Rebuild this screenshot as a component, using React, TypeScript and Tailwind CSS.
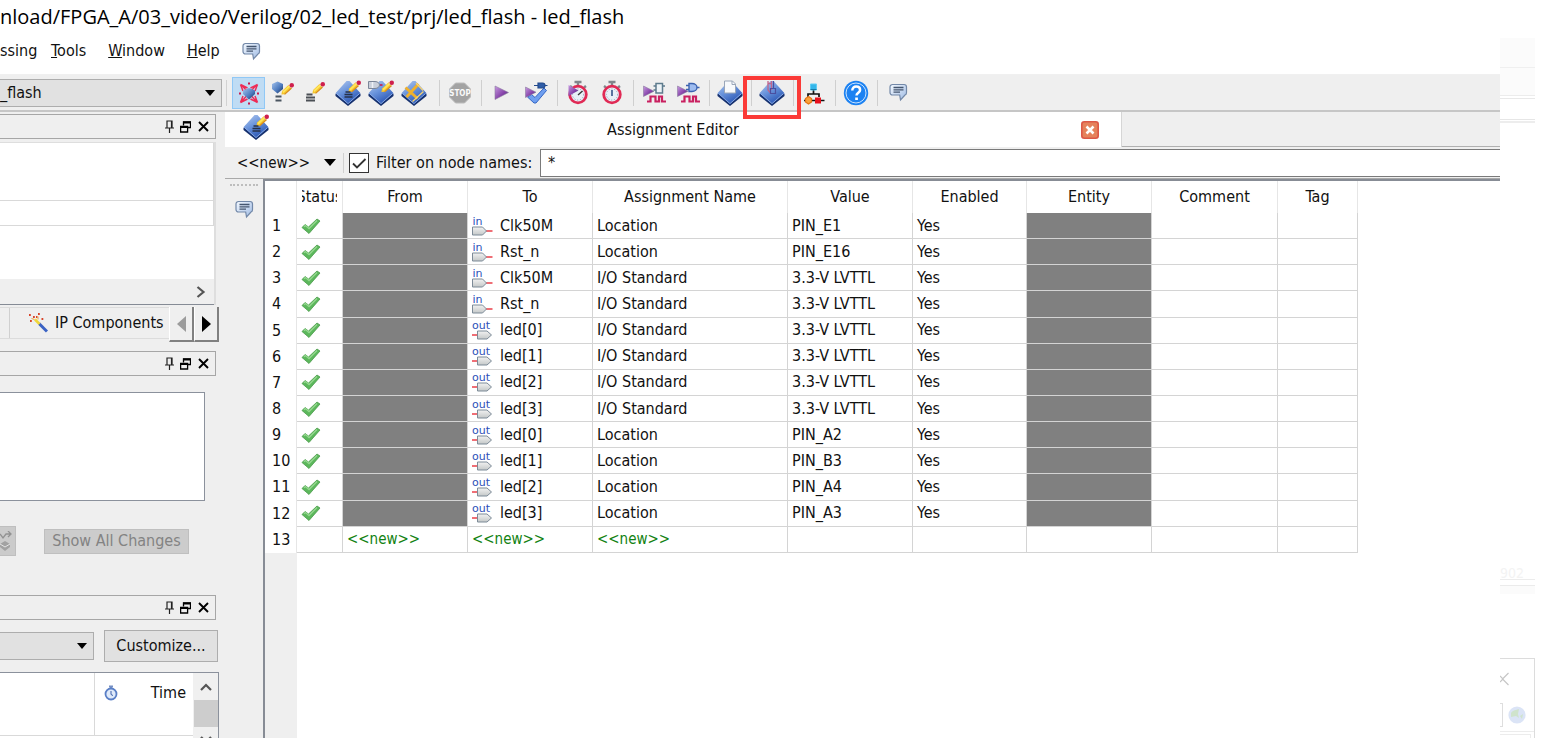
import type { ReactNode } from "react";

const INK = "text-[#111111]";

/* ---------- shared drawings ---------- */

function Defs() {
  return (
    <svg width="0" height="0" className="absolute" aria-hidden="true">
      <defs>
        <linearGradient id="blue" x1="0" y1="0" x2="0.6" y2="1">
          <stop offset="0" stopColor="#b4caee" />
          <stop offset="0.5" stopColor="#6a94dc" />
          <stop offset="1" stopColor="#2a56b4" />
        </linearGradient>
        <linearGradient id="purple" x1="0" y1="0" x2="1" y2="1">
          <stop offset="0" stopColor="#c79be0" />
          <stop offset="0.6" stopColor="#8440a8" />
          <stop offset="1" stopColor="#3d5560" />
        </linearGradient>
        <linearGradient id="bubble" x1="0" y1="0" x2="1" y2="1">
          <stop offset="0" stopColor="#f4f9ff" />
          <stop offset="1" stopColor="#9fbbe4" />
        </linearGradient>
        <linearGradient id="gem" x1="0" y1="0" x2="1" y2="1">
          <stop offset="0" stopColor="#a5c4ee" />
          <stop offset="0.6" stopColor="#4a78bd" />
          <stop offset="1" stopColor="#1d2f4f" />
        </linearGradient>
        <linearGradient id="pin" x1="0" y1="0" x2="0" y2="1">
          <stop offset="0" stopColor="#f2f2f2" />
          <stop offset="1" stopColor="#c4c8c8" />
        </linearGradient>
      </defs>
    </svg>
  );
}

function Icon({ children }: { children: ReactNode }) {
  return (
    <svg viewBox="0 0 26 26" className="h-[26px] w-[26px] shrink-0" fill="none" aria-hidden="true">
      {children}
    </svg>
  );
}

function Diamond() {
  return (
    <>
      <path d="M13 3 25.500 14v2L13 26 .5 16v-2z" fill="#16316f" />
      <path d="M11.500 1h3l11 12.200L13 23.600.5 13.200z" fill="url(#blue)" />
      <path d="m1.500 13.600 11.500 10 11.500-10" stroke="#8fb0ea" strokeWidth="0.9" />
    </>
  );
}

function Pencil({ x = 0, y = 0 }: { x?: number; y?: number }) {
  return (
    <g transform={`translate(${x} ${y})`}>
      <path d="m12.400 11.600.7-3.600 6.600-6.200 3.200 3.200-7 6.200z" fill="#f4c430" />
      <path d="m13.400 8.600 6.800-6.400 1.300 1.300-7 6.600z" fill="#ffe65c" />
      <path d="m15.600 11.400 7-6.400" stroke="#d88a1c" strokeWidth="1.100" />
      <path d="m19.400 2.500 1.500-1.400 2.900 2.900-1.400 1.400z" fill="#e9c9a8" />
      <circle cx="22.800" cy="2.200" r="2.200" fill="#cf1f4d" />
    </g>
  );
}

function Bubble() {
  return (
    <svg viewBox="0 0 19 19" className="h-[19px] w-[19px] shrink-0" fill="none" aria-hidden="true">
      <path
        d="M3.500 1.500h11.500a2.500 2.500 0 0 1 2.500 2.500v5.500a2.500 2.500 0 0 1-1.500 2.500l-4.500 5-.8-5H3.500A2.500 2.500 0 0 1 1 9.500V4a2.500 2.500 0 0 1 2.500-2.500z"
        fill="url(#bubble)"
        stroke="#7288a8"
        strokeWidth="1.200"
      />
      <path d="M4.500 4.500h10M4.500 6.800h10M4.500 9.100h6.500" stroke="#45566f" strokeWidth="1.300" />
    </svg>
  );
}

function SmallPlay() {
  return <path d="M2.500 7 13 12.200 2.500 17.500z" fill="url(#purple)" stroke="#8c7aa0" strokeWidth="0.600" />;
}

function Wave() {
  return <path d="M6 22.500h3.500v-5h5v5h3.500v-5h3v5h4" stroke="#c92060" strokeWidth="2.200" />;
}

/* ---------- toolbar icons ---------- */

const IcChip = () => (
  <Icon>
    <path
      d="M6 5.500 20 21M20 5.500 6 21M4.500 4.500l7 3.500M21.500 4.500l-7 3.500M4.500 22.500l7-3.500M21.500 22.500l-7-3.500M4.500 4.500l2.500 6.500M21.500 4.500 19 11M4.500 22.500 7 16M21.500 22.500 19 16"
      stroke="#ee2b56"
      strokeWidth="1.500"
    />
    <path d="M13 2.500v2M13 22.500v2M3 13.500h2M21 13.500h2" stroke="#c9184c" strokeWidth="2" />
    <path d="M13 8 19 10.500V14L13 19.500 7 14v-3.500z" fill="url(#gem)" />
  </Icon>
);

const IcGemPencil = () => (
  <Icon>
    <path d="M8.500 1.500 14 4v5L8.500 13.500 3 9V4z" fill="url(#gem)" />
    <Pencil y={3} />
    <path d="M6.500 16.500h6M6.500 20.500h6" stroke="#4a5560" strokeWidth="1.900" />
  </Icon>
);

const IcPencil = () => (
  <Icon>
    <Pencil x={-2} y={2} />
    <path d="M4.500 14.500h6M4 17.500h9M4 20.500h9" stroke="#4a4f55" strokeWidth="1.900" />
  </Icon>
);

const IcAssign = () => (
  <Icon>
    <Diamond />
    <Pencil x={1} y={0.500} />
    <path d="M10.500 12h5M9.500 14.500h8M9.500 17h8" stroke="#27324a" strokeWidth="1.600" />
  </Icon>
);

const IcPinPlan = () => (
  <Icon>
    <Diamond />
    <path d="M.500 1.500h6.500c3 0 4.500 2 4.500 3.500S10 8.500 7 8.500H.500z" fill="#c9cfda" stroke="#7b8698" />
    <path d="M4.500 2v6" stroke="#eef1f6" strokeWidth="1.500" />
    <path d="M12 5h2.500" stroke="#c9184c" strokeWidth="1.600" />
    <Pencil x={1} y={0.500} />
  </Icon>
);

const IcPlanner = () => (
  <Icon>
    <Diamond />
    <path d="m4.500 7.500 12 11M17.500 4l-12 13" stroke="#f0b12c" strokeWidth="2.800" />
    <path d="m15 3 7 7.500M11.500 21.500l11-10" stroke="#f6d272" strokeWidth="1.300" />
  </Icon>
);

const IcStop = () => (
  <Icon>
    <path d="M8.500 3h9l6 6v8l-6 6h-9l-6-6V9z" fill="#a3a3a3" stroke="#bcbcbc" />
    <text x="13" y="16.400" textAnchor="middle" fontSize="8" fontWeight="700" fill="#fafafa" fontFamily="DejaVu Sans Condensed, sans-serif">
      STOP
    </text>
  </Icon>
);

const IcPlay = () => (
  <Icon>
    <path d="M6 6 19.500 12.500 6 19.500z" fill="url(#purple)" stroke="#8c7aa0" strokeWidth="0.600" />
  </Icon>
);

const IcPlayCheck = () => (
  <Icon>
    <path d="m4.500 17 4-2.500 3.500 3 9-9.500 2.500 2.500-10.500 12.500h-2z" fill="#6f9ff0" stroke="#3566c4" />
    <SmallPlay />
    <path
      d="M11 5.500h4M15 3h4.500c2 0 2.500 1.500 2.500 2.500S21.500 8 19.500 8H15zM22 5.500h2.500"
      fill="#2f5da8"
      stroke="#234a8c"
      strokeWidth="1.200"
    />
  </Icon>
);

function Watch() {
  return (
    <>
      <path d="M9.500 2h7M13 2v4M5 6l2 1.500M21 6l-2 1.500" stroke="#80868c" strokeWidth="2.400" />
      <circle cx="13" cy="14.500" r="8.300" fill="#e8eff7" stroke="#e02a55" strokeWidth="2.800" />
      <circle cx="13" cy="14.500" r="5.600" stroke="#8e9db0" strokeDasharray="1 1.800" />
    </>
  );
}

const IcWatchPlay = () => (
  <Icon>
    <Watch />
    <path d="m13 15 4.500-4" stroke="#333" strokeWidth="1.300" />
    <path d="M3.500 5 13.500 10.500 3.500 16z" fill="url(#purple)" />
  </Icon>
);

const IcWatch = () => (
  <Icon>
    <Watch />
    <path d="M13 10v6" stroke="#3f5d8f" strokeWidth="1.700" />
  </Icon>
);

const IcSimRtl = () => (
  <Icon>
    <g transform="translate(0 -1)">
      <SmallPlay />
      <path d="M15 4.500h6.500V14H15zM12.500 7H15M12.500 11H15M21.500 7H24" fill="#edf3f7" stroke="#5d7b8d" strokeWidth="1.500" />
      <Wave />
    </g>
  </Icon>
);

const IcSimGate = () => (
  <Icon>
    <g transform="translate(0 -1)">
      <SmallPlay />
      <path
        d="M14 4.500h3c3 0 5 2 5 4s-2 4-5 4h-3zM11 6.500h3M11 10.500h3M22 8.500h2.500"
        fill="#9ebcf0"
        stroke="#3b62b0"
        strokeWidth="1.400"
      />
      <Wave />
    </g>
  </Icon>
);

const IcReport = () => (
  <Icon>
    <Diamond />
    <path d="M7.500 1h8l3 3v9h-11z" fill="#f7f9fc" stroke="#9aa6b8" />
    <path d="M15 1v3.500h3.500" stroke="#9aa6b8" />
  </Icon>
);

const IcProgrammer = () => (
  <Icon>
    <Diamond />
    <path d="M9 1v9l3 3.500M12.500 1v9M9 3.500h3.500" stroke="#c2658c" strokeWidth="1.300" />
    <path d="M11.500 8.500h5v5h-5zM14.500 1v7" stroke="#4a4f9f" strokeWidth="1.200" />
  </Icon>
);

const IcQsys = () => (
  <Icon>
    <path d="M12.500 10v4M7 17v-3h11v3M3 20.500h2M10 20.500h4M20 20.500h3.500" stroke="#111" strokeWidth="1.700" />
    <path d="M9.500 4h6v6h-6z" fill="#35b6ea" stroke="#5fcdf4" />
    <path d="M9.500 9.500h6" stroke="#187aa8" />
    <path d="m7.500 16.500 3 2V22l-3 2-3-2v-3.500z" fill="#f9a33b" stroke="#e87514" strokeWidth="1.300" />
    <path d="M14 17.500h6V23.500h-6z" fill="#e8101c" />
  </Icon>
);

const IcHelp = () => (
  <Icon>
    <circle cx="13" cy="13" r="12.200" fill="#1c82f2" />
    <circle cx="13" cy="13" r="10" stroke="#c9e3ff" strokeWidth="1" />
    <path
      d="M9.300 10.500c0-2.500 1.600-3.900 3.900-3.900s3.900 1.400 3.900 3.400c0 2.700-3.600 2.800-3.600 5.500"
      stroke="#fff"
      strokeWidth="2.500"
    />
    <path d="M12.200 17.500h2.700v2.500h-2.700z" fill="#fff" />
  </Icon>
);

type ToolButtonProps = { label: string; children: ReactNode; active?: boolean; narrow?: boolean; marked?: boolean };

function ToolButton({ label, children, active, narrow, marked }: ToolButtonProps) {
  return (
    <button
      type="button"
      aria-label={label}
      className={`relative flex h-8 shrink-0 items-center justify-center ${narrow ? "w-[33px]" : "w-[34px]"} ${
        active ? "border border-[#90c8f6] bg-[#bfdcf4]" : ""
      }`}
    >
      {children}
      {marked && <span className="absolute -left-3 -top-px z-10 h-[43px] w-[58px] border-4 border-[#fb3a37]" />}
    </button>
  );
}

function Sep() {
  return (
    <span className="flex h-[26px] w-2 shrink-0 justify-center">
      <span className="w-px bg-[#cfcfcf]" />
    </span>
  );
}

function DownArrow() {
  return (
    <svg viewBox="0 0 10 6" className="h-[6px] w-[10px] shrink-0" aria-hidden="true">
      <path d="M0 0h10L5 6z" fill="#000" />
    </svg>
  );
}

/* ---------- left docks ---------- */

function DockTitle() {
  return (
    <div className="mr-[9px] flex h-[25px] shrink-0 items-center justify-end gap-[5px] border border-l-0 border-[#a6a6a6] pr-[6px]">
      <button type="button" aria-label="Pin">
        <svg viewBox="0 0 11 13" className="h-[13px] w-[11px]" fill="none" aria-hidden="true">
          <path d="M3 8V1h5v7M1 8h9M5.500 8v5" stroke="#222" strokeWidth="1.200" />
          <path d="M7.500 1v7" stroke="#222" strokeWidth="1.200" />
        </svg>
      </button>
      <button type="button" aria-label="Float">
        <svg viewBox="0 0 11 12" className="h-3 w-[11px]" fill="none" aria-hidden="true">
          <path d="M3.500 4.500V1h7v5.500H8" stroke="#000" strokeWidth="1.300" />
          <path d="M3 1.500h8M0 6h8" stroke="#000" strokeWidth="2" />
          <path d="M.600 5.500h7v5.500h-7z" stroke="#000" strokeWidth="1.300" />
        </svg>
      </button>
      <button type="button" aria-label="Close" className="pl-0.5">
        <svg viewBox="0 0 11 11" className="h-[11px] w-[11px]" fill="none" aria-hidden="true">
          <path d="m1 1 9 9M10 1l-9 9" stroke="#000" strokeWidth="1.900" />
        </svg>
      </button>
    </div>
  );
}

function LeftDocks() {
  return (
    <div className="flex w-[225px] shrink-0 flex-col overflow-hidden pt-[2px]">
      <DockTitle />
      <div className="mr-[9px] mt-[3px] flex h-[163px] shrink-0 flex-col border-r-2 border-t border-[#dedede] bg-white">
        <div className="h-[58px] border-b border-r border-[#d9d9d9]" />
        <div className="h-[25px] border-b border-r border-[#d9d9d9]" />
        <div className="flex-1" />
        <div className="flex h-[26px] items-center justify-end border-b border-[#858b95] bg-[#efefef] pr-2">
          <svg viewBox="0 0 10 12" className="h-3 w-[10px]" fill="none" aria-hidden="true">
            <path d="m1.500 1 6 5-6 5" stroke="#555" strokeWidth="2.200" />
          </svg>
        </div>
      </div>
      <div className="mt-[2px] flex h-[35px] shrink-0">
        <div className="mb-[3px] flex flex-1 border-y border-[#dcdcdc]">
          <span className="w-[10px] border-r border-[#d0d0d0]" />
          <button type="button" className="flex flex-1 items-center gap-[7px] whitespace-nowrap pl-[18px]">
            <svg viewBox="0 0 20 20" className="h-5 w-5 shrink-0" fill="none" aria-hidden="true">
              <path d="m11 10.500 8 8" stroke="#3a62c4" strokeWidth="3" />
              <path d="m7 6.500 4.500 4.500" stroke="#f0d63a" strokeWidth="2.600" />
              <path d="M1 2h1.800M5 4h1.800M10 1h1.800M13.500 6h1.800M2 8h1.800M8 4h1.500" stroke="#d8452a" strokeWidth="1.800" />
              <path d="M10 3.500v3M3.500 5.500l3 1" stroke="#f2a33a" />
            </svg>
            IP Components
          </button>
        </div>
        <button type="button" aria-label="Previous tab" className="flex w-[25px] shrink-0 items-center justify-center border-b-2 border-l border-r-2 border-[#808080] border-l-white">
          <svg viewBox="0 0 9 16" className="h-4 w-[9px]" aria-hidden="true">
            <path d="M9 0v16L0 8z" fill="#9c9c9c" />
          </svg>
        </button>
        <button type="button" aria-label="Next tab" className="mr-1.5 flex w-[25px] shrink-0 items-center justify-center border-b-2 border-l border-r-2 border-[#808080] border-l-white">
          <svg viewBox="0 0 9 16" className="h-4 w-[9px]" aria-hidden="true">
            <path d="M0 0v16l9-8z" fill="#000" />
          </svg>
        </button>
      </div>

      <div className="h-[9px] shrink-0" />
      <DockTitle />
      <div className="mr-5 mt-4 h-[109px] shrink-0 border border-l-0 border-[#8b919c] bg-white" />
      <div className="mt-[25px] flex h-[30px] shrink-0 items-center">
        <button type="button" aria-label="Refresh" disabled className="flex h-[30px] w-4 items-center border border-l-0 border-[#bfbfbf] bg-[#cbcbcb]">
          <svg viewBox="0 0 12 20" className="h-5 w-3" fill="none" aria-hidden="true">
            <path d="M0 3l3 4 3-4h4M8 0l3 3-3 3" stroke="#929292" strokeWidth="1.300" />
            <path d="M0 13l5-3 5 3v3l-5 4-5-4z" fill="#a2a2a2" />
            <path d="m0 13 5 3 5-3" stroke="#e4e4e4" />
          </svg>
        </button>
        <button type="button" disabled className="ml-7 h-[25px] w-[145px] whitespace-nowrap border border-[#bfbfbf] bg-[#cccccc] leading-none text-[#838383]">
          Show All Changes
        </button>
      </div>

      <div className="h-[39px] shrink-0" />
      <DockTitle />
      <div className="mt-[10px] flex h-8 shrink-0 items-center gap-[10px] pr-[7px]">
        <div className="relative h-7 w-[94px]">
          <select aria-label="Flow" className="h-full w-full appearance-none border border-l-0 border-[#adadad] bg-[#e1e1e1]" />
          <span className="pointer-events-none absolute right-[7px] top-[11px]">
            <DownArrow />
          </span>
        </div>
        <button type="button" className="h-8 flex-1 whitespace-nowrap border border-[#adadad] bg-[#e1e1e1]">
          Customize...
        </button>
      </div>
      <div className="mr-1.5 mt-[10px] flex min-h-0 flex-1 overflow-hidden border-r border-t border-[#8b919c] bg-white">
        <div className="flex-1">
          <div className="flex h-[63px] border-b border-[#d9d9d9]">
            <div className="w-[95px] border-r border-[#d9d9d9]" />
            <div className="flex h-10 flex-1 items-center justify-between pl-[9px] pr-[7px]">
              <svg viewBox="0 0 14 16" className="h-4 w-[14px]" fill="none" aria-hidden="true">
                <path d="M5 1.500h4M7 1v3" stroke="#7690c4" strokeWidth="2" />
                <circle cx="7" cy="9" r="5.500" fill="#dfeafa" stroke="#5a7fc6" strokeWidth="1.800" />
                <path d="M7 6v3.500l2 1" stroke="#3c5ea8" />
              </svg>
              <span>Time</span>
            </div>
          </div>
        </div>
        <div className="flex w-[25px] shrink-0 flex-col items-center bg-[#f0f0f0]">
          <div className="flex h-[27px] shrink-0 items-center">
            <svg viewBox="0 0 12 8" className="h-2 w-3" fill="none" aria-hidden="true">
              <path d="m1 7 5-5 5 5" stroke="#555" strokeWidth="2.200" />
            </svg>
          </div>
          <div className="h-[27px] w-[24px] shrink-0 bg-[#cdcdcd]" />
          <svg viewBox="0 0 12 8" className="mt-[9px] h-2 w-3 shrink-0" fill="none" aria-hidden="true">
            <path d="m1 1 5 5 5-5" stroke="#555" strokeWidth="2.200" />
          </svg>
        </div>
      </div>
    </div>
  );
}

/* ---------- assignment table ---------- */

type Row = { dir: "in" | "out"; to: string; name: string; value: string };

const rows: Row[] = [
  { dir: "in", to: "Clk50M", name: "Location", value: "PIN_E1" },
  { dir: "in", to: "Rst_n", name: "Location", value: "PIN_E16" },
  { dir: "in", to: "Clk50M", name: "I/O Standard", value: "3.3-V LVTTL" },
  { dir: "in", to: "Rst_n", name: "I/O Standard", value: "3.3-V LVTTL" },
  { dir: "out", to: "led[0]", name: "I/O Standard", value: "3.3-V LVTTL" },
  { dir: "out", to: "led[1]", name: "I/O Standard", value: "3.3-V LVTTL" },
  { dir: "out", to: "led[2]", name: "I/O Standard", value: "3.3-V LVTTL" },
  { dir: "out", to: "led[3]", name: "I/O Standard", value: "3.3-V LVTTL" },
  { dir: "out", to: "led[0]", name: "Location", value: "PIN_A2" },
  { dir: "out", to: "led[1]", name: "Location", value: "PIN_B3" },
  { dir: "out", to: "led[2]", name: "Location", value: "PIN_A4" },
  { dir: "out", to: "led[3]", name: "Location", value: "PIN_A3" },
];

const headers = ["From", "To", "Assignment Name", "Value", "Enabled", "Entity", "Comment", "Tag"];
const CELL = "border-b border-r border-[#d4d4d4] p-0 pl-1";

function Check() {
  return (
    <svg viewBox="0 0 20 16" className="h-4 w-5" fill="none" aria-hidden="true">
      <path d="m1 9.500 3-3 3.500 2.500L16 1l3 2L8 15.500z" fill="#5cb85c" stroke="#4a9a4a" strokeWidth="0.800" />
      <path d="m3 8.800 1.500-1.200L8 10.500l8-8" stroke="#95d88f" strokeWidth="1.300" />
    </svg>
  );
}

function PinIcon({ dir }: { dir: "in" | "out" }) {
  return (
    <svg viewBox="0 0 21 20" className="h-5 w-[21px] shrink-0" fill="none" aria-hidden="true">
      <text x={dir === "in" ? 0.5 : 0} y="8.500" fontSize="11" fill="#2c50b8" fontFamily="DejaVu Sans, sans-serif">
        {dir}
      </text>
      {dir === "in" ? (
        <>
          <path d="M14 15h6.500" stroke="#e8323c" strokeWidth="1.400" />
          <path d="M.500 11h10l4 4-4 4h-10z" fill="url(#pin)" stroke="#7d8b98" />
        </>
      ) : (
        <>
          <path d="M0 15h6" stroke="#e8323c" strokeWidth="1.400" />
          <path d="M5.500 11h9.500l4.500 4-4.500 4H5.500z" fill="url(#pin)" stroke="#7d8b98" />
        </>
      )}
    </svg>
  );
}

function AssignmentTable() {
  return (
    <table className="h-[372px] w-[1093px] table-fixed border-separate border-spacing-0 bg-white">
      <colgroup>
        <col className="w-8" />
        <col className="w-[46px]" />
        <col className="w-[125px]" />
        <col className="w-[125px]" />
        <col className="w-[195px]" />
        <col className="w-[125px]" />
        <col className="w-[114px]" />
        <col className="w-[125px]" />
        <col className="w-[126px]" />
        <col className="w-[80px]" />
      </colgroup>
      <thead>
        <tr className="h-8">
          <th className="border-r border-[#e6e6e6] p-0" aria-label="Row" />
          <th className="border-r border-[#e6e6e6] p-0 font-normal">
            <span className="mx-auto flex w-[35px] justify-center overflow-hidden">Status</span>
          </th>
          {headers.map((h) => (
            <th key={h} className="border-r border-[#e6e6e6] p-0 font-normal">
              {h}
            </th>
          ))}
        </tr>
      </thead>
      <tbody>
        {rows.map((r, i) => (
          <tr key={i} className="h-[26px]">
            <td className="border-r border-[#e6e6e6] p-0 pl-[7px]">{i + 1}</td>
            <td className={CELL}>
              <Check />
            </td>
            <td className="border-b border-r border-[#d4d4d4] bg-[#808080] p-0" />
            <td className={CELL}>
              <span className="flex items-center gap-[7px]">
                <PinIcon dir={r.dir} />
                {r.to}
              </span>
            </td>
            <td className={CELL}>{r.name}</td>
            <td className={CELL}>{r.value}</td>
            <td className={CELL}>Yes</td>
            <td className="border-b border-r border-[#d4d4d4] bg-[#808080] p-0" />
            <td className={CELL} />
            <td className={CELL} />
          </tr>
        ))}
        <tr className="h-[26px] text-[15px] text-[#128212]">
          <td className="border-r border-[#e6e6e6] p-0 pl-[7px] text-base leading-5 text-[#111111]">13</td>
          <td className={CELL} />
          <td className={CELL}>&lt;&lt;new&gt;&gt;</td>
          <td className={CELL}>&lt;&lt;new&gt;&gt;</td>
          <td className={CELL}>&lt;&lt;new&gt;&gt;</td>
          <td className={CELL} />
          <td className={CELL} />
          <td className={CELL} />
          <td className={CELL} />
          <td className={CELL} />
        </tr>
      </tbody>
    </table>
  );
}

function Editor() {
  return (
    <div className="flex min-w-0 flex-1 flex-col">
      <div className="flex h-[35px] shrink-0">
        <div className="flex w-[897px] items-center border-r border-[#d6d6d6] bg-white pl-[18px] pr-[22px]">
          <span className="-mt-1.5">
            <IcAssign />
          </span>
          <span className="flex-1 pr-1 text-center">Assignment Editor</span>
          <button type="button" aria-label="Close tab">
            <svg viewBox="0 0 18 18" className="h-[18px] w-[18px]" fill="none" aria-hidden="true">
              <rect x="0.800" y="0.800" width="16.400" height="16.400" rx="2.500" fill="#e5825c" stroke="#dc5847" strokeWidth="1.600" />
              <path d="m5.500 5.500 7 7M12.500 5.500l-7 7" stroke="#fff" strokeWidth="2.600" />
            </svg>
          </button>
        </div>
        <div className="flex-1 border-b border-[#b0b0b0]" />
      </div>
      <div className="flex h-8 shrink-0 items-center border-b border-[#a9a9a9] pl-3">
        <button type="button" className="flex w-[107px] items-center justify-between border-r border-[#d0d0d0] pr-[7px] text-[15px]">
          &lt;&lt;new&gt;&gt;
          <svg viewBox="0 0 12 7" className="h-[7px] w-3" aria-hidden="true">
            <path d="M0 0h12L6 7z" fill="#000" />
          </svg>
        </button>
        <span className="relative ml-[5px] h-5 w-5">
          <input id="filter-on" type="checkbox" defaultChecked className="block h-5 w-5 appearance-none border border-[#333] bg-white" />
          <svg viewBox="0 0 20 20" className="pointer-events-none absolute inset-0 h-5 w-5" fill="none" aria-hidden="true">
            <path d="m4 10.500 4 4L16.500 6" stroke="#333" strokeWidth="1.800" />
          </svg>
        </span>
        <label htmlFor="filter-on" className="w-[171px] whitespace-nowrap pl-[7px]">
          Filter on node names:
        </label>
        <input aria-label="Filter" defaultValue="*" className="h-7 min-w-0 flex-1 border border-r-0 border-[#7a7a7a] bg-white px-[7px]" />
      </div>
      <div className="flex min-h-0 flex-1">
        <div className="flex w-[38px] shrink-0 flex-col items-center pt-[5px]">
          <span className="w-7 border-t-2 border-dotted border-[#bdbdbd]" />
          <button type="button" aria-label="Messages" className="mt-3.5">
            <Bubble />
          </button>
        </div>
        <div className="flex min-w-0 flex-1 flex-col border-l-2 border-t-2 border-[#878c95] bg-white">
          <AssignmentTable />
          <div className="w-8 flex-1 bg-[#efefef]" />
        </div>
      </div>
    </div>
  );
}

/* ---------- faded strip at the right ---------- */

function FadedStrip() {
  return (
    <aside className="flex w-[61px] shrink-0 flex-col overflow-hidden bg-white pr-[26px]">
      <div className="h-[38px] shrink-0" />
      <div className="h-[30px] shrink-0 border-b border-[#efefef] bg-[#fbfbfb]" />
      <div className="h-[28px] shrink-0 border-b border-[#ececec] bg-[#fbfbfb]" />
      <div className="h-[3px] shrink-0 border-b border-[#e8e8e8]" />
      <div className="h-[21px] shrink-0 border-b border-[#e6e6e6]" />
      <div className="h-[3px] shrink-0 border-b-2 border-[#ededed]" />
      <div className="h-[443px] shrink-0" />
      <div className="h-[14px] shrink-0 border-b border-[#ececec] text-[14px] leading-[14px] text-[#f3f3f3]">902</div>
      <div className="h-[6px] shrink-0 border-b border-[#ebebeb]" />
      <div className="h-[8px] shrink-0 bg-[#fbfbfb]" />
      <div className="h-[64px] shrink-0" />
      <div className="min-h-0 flex-1 overflow-hidden border-r border-t border-[#dcdcdc]">
        <div className="flex h-[40px] items-center">
          <svg viewBox="0 0 9 14" className="h-3.5 w-[9px]" fill="none" aria-hidden="true">
            <path d="m8.500 1-6 6 6 6M0 4l3 3-3 3" stroke="#c6c6c6" strokeWidth="1.200" />
          </svg>
        </div>
        <div className="mt-[4px] flex h-[24px] items-center gap-[5px]">
          <span className="h-6 w-[3px] border border-l-0 border-[#dedede]" />
          <svg viewBox="0 0 18 18" className="h-[18px] w-[18px]" aria-hidden="true">
            <circle cx="9" cy="9" r="8.600" fill="#dbe4f6" />
            <path d="M3 7c2-3 5-3 8-4l-1 5 1 4-3-2-5 1zM12 10l3-2-1 5z" fill="#cfe3cc" />
          </svg>
        </div>
        <div className="mt-[2px] h-[3px] border-b border-[#ececec]" />
        <div className="mr-[3px] mt-[2px] h-5 border-r border-t border-[#ececec]" />
      </div>
    </aside>
  );
}

export default function App() {
  return (
    <div className={`flex h-screen overflow-hidden bg-white font-['DejaVu_Sans_Condensed','DejaVu_Sans',sans-serif] text-base leading-5 ${INK}`}>
      <Defs />
      <main className="flex min-w-0 flex-1 flex-col">
        <h1 className="flex h-[34px] shrink-0 items-center whitespace-nowrap font-['Open_Sans','Noto_Sans',sans-serif] text-[20px] font-normal text-black">
          nload/FPGA_A/03_video/Verilog/02_led_test/prj/led_flash - led_flash
        </h1>
        <nav className="flex h-[34px] shrink-0 items-center gap-[22px]">
          <button type="button" className="w-[29px] text-left">ssing</button>
          <button type="button"><u>T</u>ools</button>
          <button type="button"><u>W</u>indow</button>
          <button type="button"><u>H</u>elp</button>
          <button type="button" aria-label="Feedback">
            <Bubble />
          </button>
        </nav>
        <div className="h-[6px] shrink-0" />
        <div className="flex min-h-0 flex-1 flex-col border-t border-[#f0f0f0] bg-[#efefef]">
          <div className="flex h-[37px] shrink-0 items-center border-b-2 border-[#c6c6c6]">
            <div className="relative h-7 w-[222px] shrink-0">
              <select aria-label="Project" className="h-full w-full appearance-none border border-l-0 border-[#adadad] bg-[#e1e1e1] p-0">
                <option>_flash</option>
              </select>
              <span className="pointer-events-none absolute right-[7px] top-[11px]">
                <DownArrow />
              </span>
            </div>
            <span className="mx-1 h-[26px] w-px shrink-0 bg-[#d2d2d2]" />
            <div className="mr-[5px] flex pl-px">
              <ToolButton label="Project chip" active narrow><IcChip /></ToolButton>
              <ToolButton label="Edit settings" narrow><IcGemPencil /></ToolButton>
              <ToolButton label="Edit" narrow><IcPencil /></ToolButton>
              <ToolButton label="Assignment editor" narrow><IcAssign /></ToolButton>
              <ToolButton label="Pin planner" narrow><IcPinPlan /></ToolButton>
              <ToolButton label="Chip planner" narrow><IcPlanner /></ToolButton>
            </div>
            <Sep />
            <ToolButton label="Stop"><IcStop /></ToolButton>
            <Sep />
            <ToolButton label="Start compilation"><IcPlay /></ToolButton>
            <ToolButton label="Start analysis"><IcPlayCheck /></ToolButton>
            <Sep />
            <ToolButton label="Timing analysis"><IcWatchPlay /></ToolButton>
            <ToolButton label="Timing analyzer"><IcWatch /></ToolButton>
            <Sep />
            <ToolButton label="RTL simulation"><IcSimRtl /></ToolButton>
            <ToolButton label="Gate simulation"><IcSimGate /></ToolButton>
            <Sep />
            <ToolButton label="Compilation report"><IcReport /></ToolButton>
            <Sep />
            <ToolButton label="Programmer" marked><IcProgrammer /></ToolButton>
            <Sep />
            <ToolButton label="Qsys"><IcQsys /></ToolButton>
            <Sep />
            <ToolButton label="Help"><IcHelp /></ToolButton>
            <Sep />
            <ToolButton label="Feedback"><Bubble /></ToolButton>
          </div>
          <div className="flex min-h-0 flex-1">
            <LeftDocks />
            <Editor />
          </div>
        </div>
      </main>
      <FadedStrip />
    </div>
  );
}
